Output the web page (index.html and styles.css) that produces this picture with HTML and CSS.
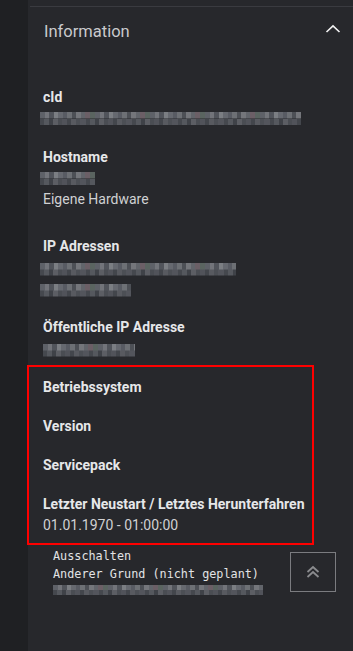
FILE: index.html
```html
<!DOCTYPE html>
<html lang="de">
<head>
<meta charset="utf-8">
<link rel="stylesheet" href="styles.css">
</head>
<body>
<div class="layout">
  <aside class="rail"></aside>
  <main class="panel">
    <section class="card">
      <header class="card-head">
        <h2 class="card-title">Information</h2>
        <svg class="chev" width="16" height="10" viewBox="0 0 16 10"><path d="M1.5 8 L8 1.8 L14.5 8" fill="none" stroke="#f2f2f2" stroke-width="1.6"/></svg>
      </header>
      <div class="info">
        <div class="item">
          <div class="label">cId</div>
          <div class="value"><span class="blur w-cid"></span></div>
        </div>
        <div class="item">
          <div class="label">Hostname</div>
          <div class="value"><span class="blur w-host"></span></div>
          <div class="value text extra">Eigene Hardware</div>
        </div>
        <div class="item">
          <div class="label">IP Adressen</div>
          <div class="value low"><span class="blur w-ip1"></span></div>
          <div class="value low"><span class="blur w-ip2"></span></div>
        </div>
        <div class="item before-box">
          <div class="label">Öffentliche IP Adresse</div>
          <div class="value low"><span class="blur w-pub"></span></div>
        </div>
        <div class="highlight">
          <div class="item">
            <div class="label">Betriebssystem</div>
          </div>
          <div class="item">
            <div class="label">Version</div>
          </div>
          <div class="item">
            <div class="label">Servicepack</div>
          </div>
          <div class="item last">
            <div class="label">Letzter Neustart / Letztes Herunterfahren</div>
            <div class="value text">01.01.1970 - 01:00:00</div>
          </div>
        </div>
        <div class="mono">
          <div>Ausschalten</div>
          <div>Anderer Grund (nicht geplant)</div>
          <div class="mono-blur"><span class="blur w-mono"></span></div>
        </div>
      </div>
      <button class="to-top" aria-label="Nach oben">
        <svg width="16" height="14" viewBox="0 0 16 14"><path d="M2.5 7 L8 2 L13.5 7 M2.5 12 L8 7 L13.5 12" fill="none" stroke="#8a8b8e" stroke-width="1.8"/></svg>
      </button>
    </section>
  </main>
</div>
</body>
</html>
```
FILE: styles.css
```css
html, body {
  margin: 0;
  padding: 0;
  height: 100%;
  background: #27282c;
}
body {
  font-family: Roboto, "Noto Sans", sans-serif;
  overflow: hidden;
}
.layout {
  display: flex;
  min-height: 651px;
}
.rail {
  width: 28px;
  flex: none;
  background: #1f2023;
}
.panel {
  flex: 1;
  background: #27282c;
  padding-top: 6px;
  position: relative;
}
.card {
  border-top: 1px solid #3a3b40;
  margin-left: 2px;
  position: relative;
  min-height: 640px;
}
.card-head {
  display: flex;
  align-items: center;
  justify-content: space-between;
  padding: 13px 12px 0 14px;
  height: 24px;
}
.card-title {
  margin: 0;
  font-size: 16.5px;
  font-weight: 400;
  color: #c9cacd;
  line-height: 24px;
}
.chev {
  display: block;
  margin-top: -6px;
}
.info {
  padding: 43px 0 0 13px;
}
.item {
  margin-bottom: 18px;
}
.item.before-box {
  margin-bottom: 6px;
}
.label {
  font-size: 14px;
  font-weight: 700;
  color: #e6e7e9;
  line-height: 21px;
}
.value {
  font-size: 14px;
  color: #d0d1d3;
  line-height: 21px;
  height: 21px;
  display: flex;
  align-items: center;
}
.value.low .blur {
  margin-top: 3px;
}
.value.text {
  display: block;
}
.value.extra {
  padding-bottom: 8px;
}
.blur {
  display: block;
  height: 13px;
  margin-left: -3px;
  background:
    repeating-linear-gradient(90deg,
      #5e6168 0 5px, #72747a 5px 9px, #51545b 9px 14px, #7b7e83 14px 18px,
      #666970 18px 23px, #585b63 23px 27px, #6d7075 27px 32px, #4d5056 32px 36px,
      #74767b 36px 41px, #62656b 41px 45px, #6b5f66 45px 50px, #5a6460 50px 55px) top / 100% 50% no-repeat,
    repeating-linear-gradient(90deg,
      #45484e 0 4px, #55585e 4px 9px, #3f4248 9px 13px, #5c5e64 13px 18px,
      #4a4d53 18px 22px, #51535a 22px 27px, #43464c 27px 31px, #585a60 31px 36px,
      #4c4f55 36px 40px, #53555c 40px 46px) bottom / 100% 50% no-repeat;
}
.w-cid { width: 261px; }
.w-host { width: 55px; }
.w-ip1 { width: 196px; }
.w-ip2 { width: 91px; }
.w-pub { width: 92px; margin-left: 0; }
.w-mono { width: 210px; height: 10px; margin-left: 0; }
.highlight {
  border: 2px solid #ff0000;
  margin: 0 0 0 -16px;
  width: 269px;
  padding: 10px 0 0 14px;
}
.highlight .item.last {
  margin-bottom: 7px;
}
.mono {
  font-family: "DejaVu Sans Mono", "Liberation Mono", monospace;
  font-size: 11.8px;
  color: #e2e3e5;
  line-height: 18px;
  padding: 2px 0 0 10px;
}
.mono-blur {
  padding-top: 2px;
}
.to-top {
  position: absolute;
  left: 260px;
  top: 545px;
  width: 46px;
  height: 40px;
  background: transparent;
  border: 1px solid #7b7c80;
  display: flex;
  align-items: center;
  justify-content: center;
  padding: 0;
}
```
